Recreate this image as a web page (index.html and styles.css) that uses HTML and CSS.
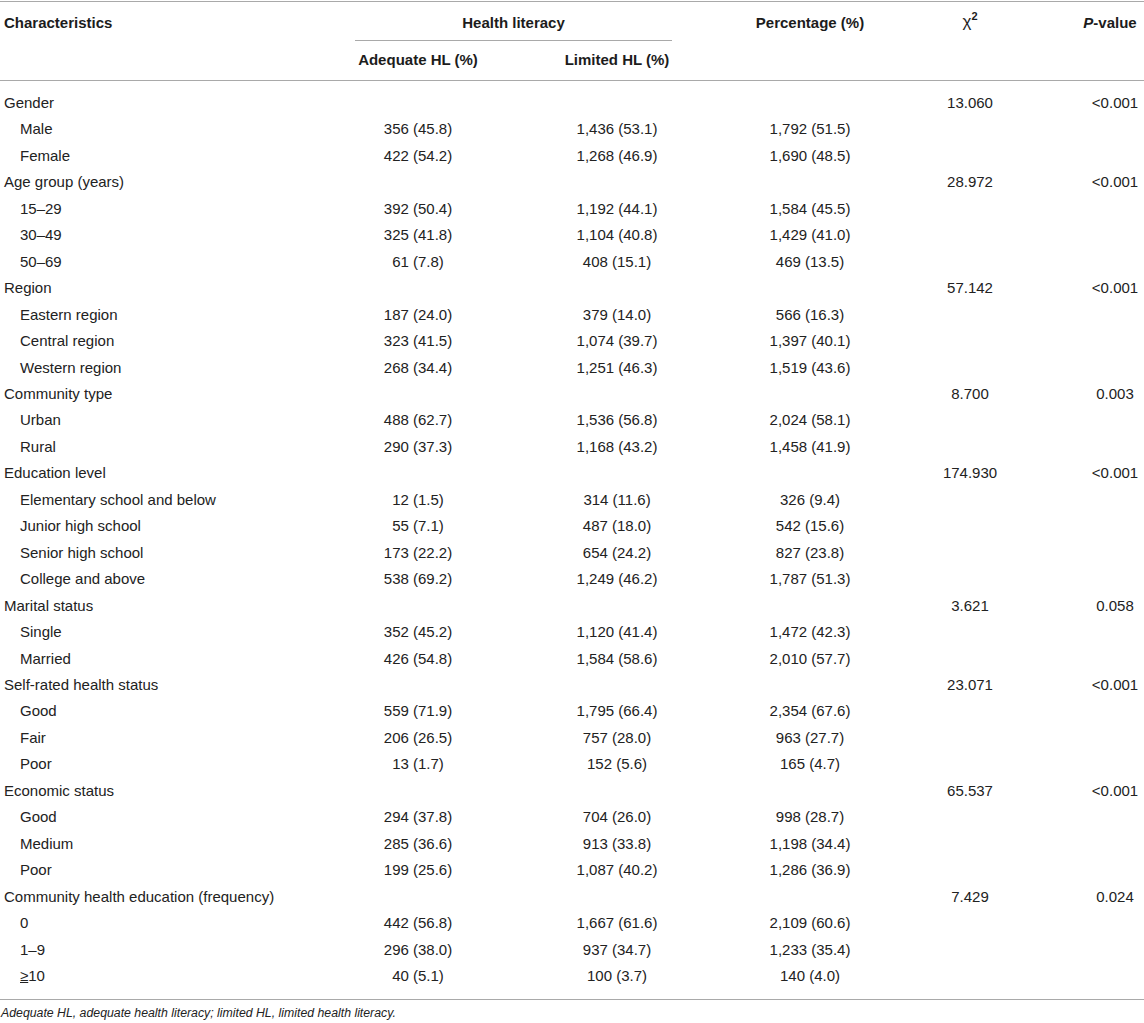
FILE: index.html
```html
<!DOCTYPE html>
<html lang="en">
<head>
<meta charset="utf-8">
<title>Health literacy table</title>
<link rel="stylesheet" href="styles.css">
</head>
<body>
<div class="wrap">
<table class="tbl">
  <colgroup>
    <col class="c1"><col class="c2"><col class="c3"><col class="c4"><col class="c5"><col class="c6">
  </colgroup>
  <thead>
    <tr class="h1">
      <th rowspan="2" class="left">Characteristics</th>
      <th colspan="2" class="group"><div class="group-line">Health literacy</div></th>
      <th rowspan="2">Percentage (%)</th>
      <th rowspan="2" class="chi">χ<sup>2</sup></th>
      <th rowspan="2" class="pcol phead"><i>P</i>-value</th>
    </tr>
    <tr class="h2">
      <th>Adequate HL (%)</th>
      <th>Limited HL (%)</th>
    </tr>
  </thead>
  <tbody>
    <tr class="cat first"><td>Gender</td><td></td><td></td><td></td><td>13.060</td><td class="pcol">&lt;0.001</td></tr>
    <tr><td class="sub">Male</td><td>356 (45.8)</td><td>1,436 (53.1)</td><td>1,792 (51.5)</td><td></td><td class="pcol"></td></tr>
    <tr><td class="sub">Female</td><td>422 (54.2)</td><td>1,268 (46.9)</td><td>1,690 (48.5)</td><td></td><td class="pcol"></td></tr>
    <tr class="cat"><td>Age group (years)</td><td></td><td></td><td></td><td>28.972</td><td class="pcol">&lt;0.001</td></tr>
    <tr><td class="sub">15–29</td><td>392 (50.4)</td><td>1,192 (44.1)</td><td>1,584 (45.5)</td><td></td><td class="pcol"></td></tr>
    <tr><td class="sub">30–49</td><td>325 (41.8)</td><td>1,104 (40.8)</td><td>1,429 (41.0)</td><td></td><td class="pcol"></td></tr>
    <tr><td class="sub">50–69</td><td>61 (7.8)</td><td>408 (15.1)</td><td>469 (13.5)</td><td></td><td class="pcol"></td></tr>
    <tr class="cat"><td>Region</td><td></td><td></td><td></td><td>57.142</td><td class="pcol">&lt;0.001</td></tr>
    <tr><td class="sub">Eastern region</td><td>187 (24.0)</td><td>379 (14.0)</td><td>566 (16.3)</td><td></td><td class="pcol"></td></tr>
    <tr><td class="sub">Central region</td><td>323 (41.5)</td><td>1,074 (39.7)</td><td>1,397 (40.1)</td><td></td><td class="pcol"></td></tr>
    <tr><td class="sub">Western region</td><td>268 (34.4)</td><td>1,251 (46.3)</td><td>1,519 (43.6)</td><td></td><td class="pcol"></td></tr>
    <tr class="cat"><td>Community type</td><td></td><td></td><td></td><td>8.700</td><td class="pcol">0.003</td></tr>
    <tr><td class="sub">Urban</td><td>488 (62.7)</td><td>1,536 (56.8)</td><td>2,024 (58.1)</td><td></td><td class="pcol"></td></tr>
    <tr><td class="sub">Rural</td><td>290 (37.3)</td><td>1,168 (43.2)</td><td>1,458 (41.9)</td><td></td><td class="pcol"></td></tr>
    <tr class="cat"><td>Education level</td><td></td><td></td><td></td><td>174.930</td><td class="pcol">&lt;0.001</td></tr>
    <tr><td class="sub">Elementary school and below</td><td>12 (1.5)</td><td>314 (11.6)</td><td>326 (9.4)</td><td></td><td class="pcol"></td></tr>
    <tr><td class="sub">Junior high school</td><td>55 (7.1)</td><td>487 (18.0)</td><td>542 (15.6)</td><td></td><td class="pcol"></td></tr>
    <tr><td class="sub">Senior high school</td><td>173 (22.2)</td><td>654 (24.2)</td><td>827 (23.8)</td><td></td><td class="pcol"></td></tr>
    <tr><td class="sub">College and above</td><td>538 (69.2)</td><td>1,249 (46.2)</td><td>1,787 (51.3)</td><td></td><td class="pcol"></td></tr>
    <tr class="cat"><td>Marital status</td><td></td><td></td><td></td><td>3.621</td><td class="pcol">0.058</td></tr>
    <tr><td class="sub">Single</td><td>352 (45.2)</td><td>1,120 (41.4)</td><td>1,472 (42.3)</td><td></td><td class="pcol"></td></tr>
    <tr><td class="sub">Married</td><td>426 (54.8)</td><td>1,584 (58.6)</td><td>2,010 (57.7)</td><td></td><td class="pcol"></td></tr>
    <tr class="cat"><td>Self-rated health status</td><td></td><td></td><td></td><td>23.071</td><td class="pcol">&lt;0.001</td></tr>
    <tr><td class="sub">Good</td><td>559 (71.9)</td><td>1,795 (66.4)</td><td>2,354 (67.6)</td><td></td><td class="pcol"></td></tr>
    <tr><td class="sub">Fair</td><td>206 (26.5)</td><td>757 (28.0)</td><td>963 (27.7)</td><td></td><td class="pcol"></td></tr>
    <tr><td class="sub">Poor</td><td>13 (1.7)</td><td>152 (5.6)</td><td>165 (4.7)</td><td></td><td class="pcol"></td></tr>
    <tr class="cat"><td>Economic status</td><td></td><td></td><td></td><td>65.537</td><td class="pcol">&lt;0.001</td></tr>
    <tr><td class="sub">Good</td><td>294 (37.8)</td><td>704 (26.0)</td><td>998 (28.7)</td><td></td><td class="pcol"></td></tr>
    <tr><td class="sub">Medium</td><td>285 (36.6)</td><td>913 (33.8)</td><td>1,198 (34.4)</td><td></td><td class="pcol"></td></tr>
    <tr><td class="sub">Poor</td><td>199 (25.6)</td><td>1,087 (40.2)</td><td>1,286 (36.9)</td><td></td><td class="pcol"></td></tr>
    <tr class="cat"><td>Community health education (frequency)</td><td></td><td></td><td></td><td>7.429</td><td class="pcol">0.024</td></tr>
    <tr><td class="sub">0</td><td>442 (56.8)</td><td>1,667 (61.6)</td><td>2,109 (60.6)</td><td></td><td class="pcol"></td></tr>
    <tr><td class="sub">1–9</td><td>296 (38.0)</td><td>937 (34.7)</td><td>1,233 (35.4)</td><td></td><td class="pcol"></td></tr>
    <tr class="last"><td class="sub"><span class="ge">≥</span>10</td><td>40 (5.1)</td><td>100 (3.7)</td><td>140 (4.0)</td><td></td><td class="pcol"></td></tr>
  </tbody>
</table>
<p class="note">Adequate HL, adequate health literacy; limited HL, limited health literacy.</p>
</div>
</body>
</html>
```

FILE: styles.css
```css
html, body {
  margin: 0;
  padding: 0;
  background: #ffffff;
}

.wrap {
  width: 1144px;
  padding-top: 1px;
  font-family: "Liberation Sans", Arial, Helvetica, sans-serif;
  color: #222222;
}

.tbl {
  width: 1144px;
  table-layout: fixed;
  border-collapse: separate;
  border-spacing: 0;
  border-top: 1px solid #a9a9a9;
  font-size: 15px;
}

.c1 { width: 340px; }
.c2 { width: 156px; }
.c3 { width: 242px; }
.c4 { width: 144px; }
.c5 { width: 176px; }
.c6 { width: 86px; }

.tbl th {
  font-weight: bold;
  color: #1c1c1c;
  text-align: center;
  vertical-align: top;
  line-height: 17px;
  padding: 12px 4px 0 4px;
  white-space: nowrap;
}

.tbl th.left {
  text-align: left;
}

.tbl th[rowspan] {
  border-bottom: 1px solid #a9a9a9;
}

.tbl .h2 th {
  padding: 10px 4px 12px 4px;
  border-bottom: 1px solid #a9a9a9;
}

.tbl th.group {
  padding: 12px 0 0 0;
}

.group-line {
  margin: 0 66px 0 15px;
  padding-bottom: 9px;
  border-bottom: 1px solid #a9a9a9;
}

.tbl th.chi {
  font-size: 17px;
  font-weight: normal;
  padding-top: 11px;
}

.tbl sup {
  font-size: 11px;
  font-weight: bold;
  line-height: 0;
  vertical-align: 7px;
}

.tbl td {
  text-align: center;
  line-height: 26.45px;
  padding: 0 4px;
  white-space: nowrap;
}

.tbl td:first-child {
  text-align: left;
}

.tbl td.sub {
  padding-left: 20px;
}

.tbl th.pcol,
.tbl td.pcol {
  padding-left: 28px;
  padding-right: 0;
}

.tbl th.phead {
  padding-left: 18px;
}

.tbl tr.first td {
  padding-top: 9px;
}

.tbl tr.last td {
  padding-bottom: 10px;
  border-bottom: 1px solid #a9a9a9;
}

.ge {
  text-decoration: underline;
  text-decoration-thickness: 1px;
  text-underline-offset: 1px;
}

.note {
  margin: 0;
  padding: 5px 0 0 1px;
  font-style: italic;
  font-size: 12.3px;
  line-height: 17px;
  color: #222222;
}
```
